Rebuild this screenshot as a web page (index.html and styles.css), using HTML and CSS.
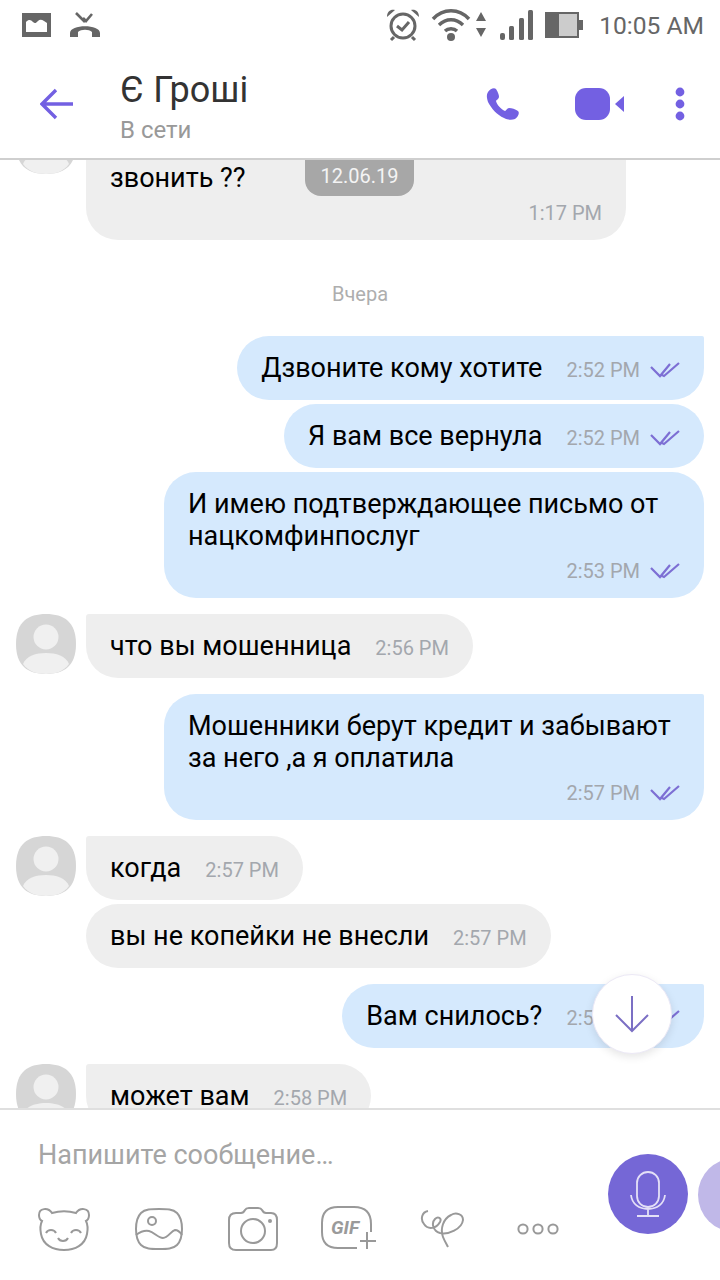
FILE: index.html
```html
<!DOCTYPE html>
<html lang="ru">

<head>
  <meta charset="UTF-8" />
  <title>Є Гроші</title>
  <link rel="stylesheet" href="styles.css">
</head>

<body>
  <div class="phone">
    <!-- Status bar -->
    <div class="statusbar">
      <div class="status-left">
        <svg width="30" height="25" viewBox="0 0 30 25"><path fill="#666" d="M0 0h29v24H0z"/><path fill="#fff" d="M4 19V9c3-3 5-2 7 0 2 2 3 1 5-1 2-2 4-1 6 0l3 2v9z"/></svg>
        <svg width="32" height="26" viewBox="0 0 32 26"><path fill="none" stroke="#666" stroke-width="2.6" d="M7 1l9 9M14 6l3 3 6-7"/><path fill="#666" d="M1 25v-4c0-9 30-9 30 0v4h-8v-5c-3-3-11-3-14 0v5z"/></svg>
      </div>
      <div class="status-right">
        <svg width="34" height="34" viewBox="0 0 34 34"><circle cx="17" cy="18" r="12" fill="none" stroke="#666" stroke-width="3"/><path fill="none" stroke="#666" stroke-width="3" d="M11 18l5 4 7-8M8 29l-3 3M26 29l3 3"/><path fill="#666" d="M1 9c0-6 4-8 8-7zM33 9c0-6-4-8-8-7z"/></svg>
        <svg width="40" height="34" viewBox="0 0 40 34"><path fill="none" stroke="#666" stroke-width="3.4" d="M2 11c10-11 26-11 36 0M8 17c7-7 17-7 24 0M14 23c3-3 9-3 12 0"/><circle cx="20" cy="29" r="4" fill="#666"/></svg>
        <svg class="arrows" width="12" height="26" viewBox="0 0 12 26"><path fill="#666" d="M6 0l5 9H1zM1 16h10l-5 9z"/></svg>
        <svg class="signal" width="34" height="30" viewBox="0 0 34 30"><g fill="#666"><rect x="0" y="23" width="5" height="7" rx="2"/><rect x="9" y="16" width="5" height="14" rx="1.5"/><rect x="19" y="8" width="5" height="22" rx="1.5"/><rect x="28" y="0" width="5" height="30" rx="1.5"/></g></svg>
        <svg class="battery" width="38" height="26" viewBox="0 0 38 26"><path fill="#ccc" d="M0 0h34v26H0z"/><path fill="#666" d="M0 0h14v26H0zM14 0h20v2H14zM14 24h20v2H14zM32 0h2v26h-2zM34 8h4v10h-4z"/></svg>
        <span class="clock">10:05 AM</span>
      </div>
    </div>

    <!-- Top bar -->
    <header class="topbar">
      <svg class="back" width="34" height="32" viewBox="0 0 34 32"><path fill="none" stroke="#7360e2" stroke-width="3.4" d="M33 16H3M16 2L2 16l14 14"/></svg>
      <div class="title">
        <div class="name">Є Гроші</div>
        <div class="presence">В сети</div>
      </div>
      <svg class="call" width="34" height="34" viewBox="0 0 34 34"><path fill="#7360e2" d="M2 5c2-3 6-5 8-3 2 3 3 6 3 8 0 2-3 3-3 4 1 4 5 8 9 10 1 0 2-3 4-3 3 0 6 1 9 3 2 2 0 6-3 8-3 1-7 1-11-1C11 28 5 21 2 15 1 11 0 8 2 5z"/></svg>
      <svg class="video" width="50" height="32" viewBox="0 0 50 32"><rect x="0" y="0" width="35" height="32" rx="11" fill="#7360e2"/><path fill="#7360e2" d="M49 8v16l-9-8z"/></svg>
      <svg class="more" width="10" height="34" viewBox="0 0 10 34"><g fill="#7360e2"><circle cx="5" cy="5" r="4.4"/><circle cx="5" cy="17" r="4.4"/><circle cx="5" cy="29" r="4.4"/></g></svg>
    </header>

    <!-- Messages -->
    <main class="chat">
      <div class="datepill">12.06.19</div>

      <div class="row in first">
        <div class="avatar"><svg width="60" height="60" viewBox="0 0 60 60"><use href="#avatar-shape"/></svg></div>
        <div class="bubble wide">
          <div class="text">&nbsp;<br>звонить ??</div>
          <div class="meta"><span class="time">1:17 PM</span></div>
        </div>
      </div>

      <div class="daymark">Вчера</div>

      <div class="row out">
        <div class="bubble">
          <span class="text">Дзвоните кому хотите</span>
          <span class="meta"><span class="time">2:52 PM</span><svg class="ticks"><use href="#ticks"/></svg></span>
        </div>
      </div>
      <div class="row out next">
        <div class="bubble">
          <span class="text">Я вам все вернула</span>
          <span class="meta"><span class="time">2:52 PM</span><svg class="ticks"><use href="#ticks"/></svg></span>
        </div>
      </div>
      <div class="row out next">
        <div class="bubble long">
          <div class="text">И имею подтверждающее письмо от<br>нацкомфинпослуг</div>
          <div class="meta"><span class="time">2:53 PM</span><svg class="ticks"><use href="#ticks"/></svg></div>
        </div>
      </div>

      <div class="row in">
        <div class="avatar"><svg width="60" height="60" viewBox="0 0 60 60"><use href="#avatar-shape"/></svg></div>
        <div class="bubble">
          <span class="text">что вы мошенница</span>
          <span class="meta"><span class="time">2:56 PM</span></span>
        </div>
      </div>

      <div class="row out">
        <div class="bubble long">
          <div class="text">Мошенники берут кредит и забывают<br>за него ,а я оплатила</div>
          <div class="meta"><span class="time">2:57 PM</span><svg class="ticks"><use href="#ticks"/></svg></div>
        </div>
      </div>

      <div class="row in">
        <div class="avatar"><svg width="60" height="60" viewBox="0 0 60 60"><use href="#avatar-shape"/></svg></div>
        <div class="bubble">
          <span class="text">когда</span>
          <span class="meta"><span class="time">2:57 PM</span></span>
        </div>
      </div>
      <div class="row in next">
        <div class="bubble">
          <span class="text">вы не копейки не внесли</span>
          <span class="meta"><span class="time">2:57 PM</span></span>
        </div>
      </div>

      <div class="row out">
        <div class="bubble">
          <span class="text">Вам снилось?</span>
          <span class="meta"><span class="time">2:57 PM</span><svg class="ticks"><use href="#ticks"/></svg></span>
        </div>
      </div>

      <div class="row in">
        <div class="avatar"><svg width="60" height="60" viewBox="0 0 60 60"><use href="#avatar-shape"/></svg></div>
        <div class="bubble">
          <span class="text">может вам</span>
          <span class="meta"><span class="time">2:58 PM</span></span>
        </div>
      </div>

      <button class="scrolldown">
        <svg width="38" height="38" viewBox="0 0 38 38"><path fill="none" stroke="#7b6fc4" stroke-width="2" d="M19 1v35M3 20l16 16 16-16"/></svg>
      </button>
    </main>

    <!-- Composer -->
    <footer class="composer">
      <div class="placeholder">Напишите сообщение…</div>
      <div class="tools">
        <svg width="52" height="44" viewBox="0 0 52 44"><g fill="none" stroke="#999" stroke-width="2"><path d="M14 6C10 0 1 1 1 8c0 3 1 5 3 6-2 4-2 8-1 13 2 11 12 16 23 16s21-5 23-16c1-5 1-9-1-13 2-1 3-3 3-6 0-7-9-8-13-2-7-2-17-2-24 0z"/><path d="M8 26c2-4 8-4 10 0M33 26c2-4 8-4 10 0M20 31c2 4 8 4 10 0"/></g></svg>
        <svg width="48" height="42" viewBox="0 0 48 42"><g fill="none" stroke="#999" stroke-width="2"><path d="M24 1c8 0 14 0 18 4 4 4 5 9 5 16s-1 12-5 16c-4 4-10 4-18 4s-14 0-18-4c-4-4-5-9-5-16S2 9 6 5c4-4 10-4 18-4z"/><circle cx="17" cy="13" r="4"/><path d="M1 27c4-3 8-5 13-4 5 1 9 7 14 7 5 0 8-7 12-8 3 0 5 2 7 5"/></g></svg>
        <svg width="50" height="44" viewBox="0 0 50 44"><g fill="none" stroke="#999" stroke-width="2"><path d="M8 43c-5 0-7-3-7-7V13c0-5 3-7 7-7h5c2 0 3-1 4-3 1-2 2-2 4-2h9c2 0 3 0 4 2 1 2 2 3 4 3h5c4 0 6 3 6 7v23c0 4-2 7-6 7z"/><circle cx="25" cy="24" r="12"/></g><circle cx="42" cy="14" r="2" fill="#999"/></svg>
        <div class="gif">
          <svg width="56" height="46" viewBox="0 0 56 46"><path fill="none" stroke="#999" stroke-width="2" d="M36 42H17C6 42 1 36 1 26v-9C1 6 6 1 17 1h16c11 0 17 6 17 17v8M46 26v17M39 35h16"/></svg>
          <span class="giflabel">GIF</span>
        </div>
        <svg class="curl" width="44" height="40" viewBox="0 0 44 40"><path fill="none" stroke="#999" stroke-width="2" d="M8 2C2 3 0 10 4 15c4 6 12 5 16-2 2-4-2-6-5-3-4 4-2 12 5 14 8 2 22-4 23-13 0-6-7-8-12-5-8 4-11 14-8 22 2 5 4 8 5 10"/></svg>
        <svg class="dots" width="42" height="12" viewBox="0 0 42 12"><g fill="none" stroke="#999" stroke-width="2"><circle cx="6" cy="6" r="4.6"/><circle cx="21" cy="6" r="4.6"/><circle cx="36" cy="6" r="4.6"/></g></svg>
      </div>
      <div class="mic">
        <svg width="36" height="46" viewBox="0 0 36 46"><g fill="none" stroke="#e4e0f7" stroke-width="1.8"><rect x="7" y="1" width="22" height="35" rx="11"/><path d="M1 24c1 9 8 14 17 14s16-5 17-14M18 38v7M7 45h22"/></g></svg>
      </div>
      <div class="mic-next"></div>
    </footer>
  </div>

  <svg class="defs" width="0" height="0">
    <defs>
      <g id="avatar-shape">
        <path fill="#d6d6d6" d="M30 0C48 0 60 8 60 30S48 60 30 60 0 52 0 30 12 0 30 0z"/>
        <circle cx="30" cy="23" r="12.5" fill="#f0f0f0"/>
        <path fill="#f0f0f0" d="M7 50c3-8 13-11 23-11s20 3 23 11c-5 7-13 10-23 10S12 57 7 50z"/>
      </g>
      <g id="ticks">
        <path fill="none" stroke="#7d6fd4" stroke-width="2.2" d="M1 6l9 9L20 3M12 14l2 1L29 2"/>
      </g>
    </defs>
  </svg>
</body>

</html>
```

FILE: styles.css
```css
* {
  box-sizing: border-box;
}

body {
  margin: 0;
  background: #fff;
  font-family: Roboto, "Noto Sans", sans-serif;
  color: #000;
}

.phone {
  width: 720px;
  height: 1280px;
  display: flex;
  flex-direction: column;
  overflow: hidden;
}

.statusbar {
  height: 56px;
  flex: none;
  display: flex;
  align-items: center;
  justify-content: space-between;
  padding: 0 16px 6px 22px;
}

.status-left {
  display: flex;
  align-items: center;
  gap: 17px;
}

.status-right {
  display: flex;
  align-items: center;
  gap: 11px;
}

.arrows {
  margin-left: -7px;
}

.signal {
  margin-left: 2px;
}

.clock {
  font-size: 24.6px;
  color: #666;
  margin-left: 5px;
  white-space: nowrap;
}

.topbar {
  height: 104px;
  flex: none;
  display: flex;
  align-items: center;
  padding: 0 35px 6px 40px;
  border-bottom: 2px solid #cfcfcf;
  background: #fff;
  position: relative;
  z-index: 2;
}

.title {
  margin-left: 46px;
  padding-top: 8px;
  flex: 1;
}

.name {
  font-size: 36px;
  line-height: 40px;
  color: #333;
}

.presence {
  font-size: 24px;
  line-height: 32px;
  margin-top: 4px;
  color: #999;
}

.video {
  margin-left: 55px;
}

.more {
  margin-left: 50px;
}

.chat {
  flex: 1;
  min-height: 0;
  position: relative;
  overflow: hidden;
  padding: 0 16px;
}

.row {
  display: flex;
  margin-top: 16px;
}

.row.next {
  margin-top: 4px;
}

.row.first {
  margin-top: -46px;
}

.row.out {
  justify-content: flex-end;
}

.avatar {
  width: 60px;
  height: 60px;
  flex: none;
}

.avatar svg {
  display: block;
}

.bubble {
  display: flex;
  align-items: center;
  min-height: 64px;
  padding: 0 24px;
  background: #d5e9fd;
  border-radius: 32px 2px 32px 32px;
}

.row.out.next .bubble {
  border-radius: 32px;
}

.row.in .bubble {
  margin-left: 10px;
  background: #eeeeee;
  border-radius: 3px 32px 32px 32px;
}

.row.in.next .bubble {
  margin-left: 70px;
  border-radius: 32px;
}

.bubble.long,
.bubble.wide {
  display: block;
  width: 540px;
  padding-top: 16px;
  padding-bottom: 11px;
}

.text {
  font-size: 27px;
  line-height: 32px;
  white-space: nowrap;
}

.meta {
  display: flex;
  align-items: center;
  justify-content: flex-end;
  margin-left: 24px;
  margin-top: 4px;
  height: 32px;
}

.bubble.long .meta,
.bubble.wide .meta {
  margin-left: 0;
  margin-top: 3px;
}

.time {
  font-size: 20px;
  color: #a3a7ad;
  white-space: nowrap;
}

.ticks {
  width: 30px;
  height: 18px;
  margin-left: 10px;
  flex: none;
}

.daymark {
  margin-top: 40px;
  margin-bottom: 28px;
  height: 28px;
  line-height: 28px;
  text-align: center;
  font-size: 20px;
  color: #aeaeae;
}

.daymark + .row {
  margin-top: 0;
}

.datepill {
  position: absolute;
  left: 305px;
  top: -10px;
  width: 109px;
  height: 46px;
  padding-top: 11px;
  line-height: 30px;
  text-align: center;
  font-size: 20px;
  color: #f4f4f4;
  background: #a7a7a7;
  border-radius: 0 0 16px 16px;
  z-index: 1;
}

.scrolldown {
  position: absolute;
  left: 592px;
  top: 814px;
  width: 80px;
  height: 80px;
  padding: 0;
  border: 1px solid #ece9f6;
  border-radius: 50%;
  background: #fff;
  box-shadow: 0 3px 8px rgba(0, 0, 0, 0.1);
  display: flex;
  align-items: center;
  justify-content: center;
}

.composer {
  height: 172px;
  flex: none;
  position: relative;
  border-top: 2px solid #dfdfdf;
  background: #fff;
  padding: 28px 0 0 38px;
  z-index: 2;
}

.placeholder {
  font-size: 27px;
  line-height: 34px;
  color: #a5a5a5;
}

.tools {
  display: flex;
  align-items: center;
  height: 46px;
  margin-top: 34px;
  gap: 45px;
}

.gif {
  position: relative;
  width: 60px;
  height: 46px;
  margin-left: -2px;
}

.gif svg {
  display: block;
}

.giflabel {
  position: absolute;
  left: 10px;
  top: 10px;
  font-size: 19px;
  line-height: 24px;
  font-weight: 700;
  font-style: italic;
  color: #9a9a9a;
}

.curl {
  margin-left: -6px;
}

.dots {
  margin-left: 8px;
}

.mic {
  position: absolute;
  left: 608px;
  top: 44px;
  width: 80px;
  height: 80px;
  border-radius: 50%;
  background: #7567d6;
  display: flex;
  align-items: center;
  justify-content: center;
}

.mic-next {
  position: absolute;
  left: 698px;
  top: 48px;
  width: 74px;
  height: 74px;
  border-radius: 50%;
  background: #c0b8e8;
}

.defs {
  position: absolute;
}
```
